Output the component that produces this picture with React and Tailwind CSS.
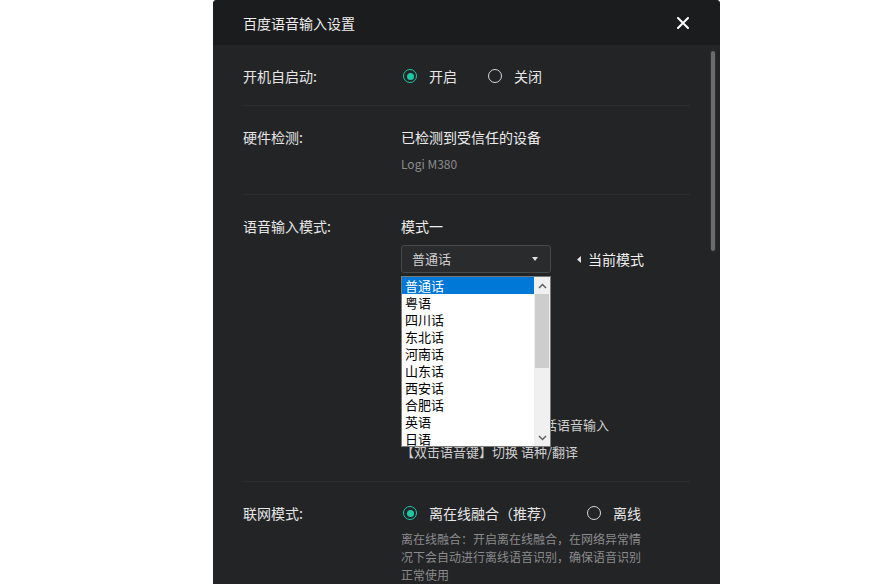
import React from "react";

const font = { fontFamily: '"Noto Sans CJK SC", "Noto Sans", sans-serif' };

function Radio({ checked }) {
  return checked ? (
    <span className="flex h-[14px] w-[14px] shrink-0 items-center justify-center rounded-full border-[1.5px] border-[#1fc7a5]">
      <span className="h-[7px] w-[7px] rounded-full bg-[#1fc7a5]" />
    </span>
  ) : (
    <span className="h-[14px] w-[14px] shrink-0 rounded-full border-[1.5px] border-[#d8d8d8]" />
  );
}

function Option({ checked, label }) {
  return (
    <div className="flex items-center gap-3">
      <Radio checked={checked} />
      <span className="text-[14px] leading-[20px] text-[#e6e6e6]">{label}</span>
    </div>
  );
}

function Divider() {
  return <div className="h-px bg-[#2c2d2f]" />;
}

const items = ["普通话", "粤语", "四川话", "东北话", "河南话", "山东话", "西安话", "合肥话", "英语", "日语", "韩语"];

export default function App() {
  return (
    <div className="flex h-[584px] w-[890px] overflow-hidden bg-white" style={font}>
      <div className="relative ml-[213px] flex w-[507px] flex-col overflow-hidden rounded-t-[4px] bg-[#232426]">
        {/* header */}
        <div className="flex h-[45px] shrink-0 items-center justify-between bg-[#1b1c1d] pl-[30px] pr-[31px]">
          <span className="text-[14px] leading-[20px] text-[#ececec]">百度语音输入设置</span>
          <svg width="12" height="12" viewBox="0 0 12 12">
            <path d="M1 1L11 11M11 1L1 11" stroke="#ffffff" strokeWidth="2" strokeLinecap="round" />
          </svg>
        </div>

        {/* body */}
        <div className="relative flex flex-col px-[30px]">
          {/* row 1 */}
          <div className="flex pb-[19px] pt-[21px]">
            <div className="w-[158px] text-[14px] leading-[20px] text-[#e6e6e6]">开机自启动:</div>
            <div className="flex items-center gap-[31px] pl-[2px]">
              <Option checked label="开启" />
              <Option label="关闭" />
            </div>
          </div>
          <Divider />

          {/* row 2 */}
          <div className="flex pb-[21px] pt-[21px]">
            <div className="w-[158px] text-[14px] leading-[20px] text-[#e6e6e6]">硬件检测:</div>
            <div className="flex flex-col">
              <span className="text-[14px] leading-[20px] text-[#ececec]">已检测到受信任的设备</span>
              <span className="mt-[8px] text-[12px] leading-[18px] text-[#8a8b8d]">Logi M380</span>
            </div>
          </div>
          <Divider />

          {/* row 3 */}
          <div className="flex pb-[20px] pt-[21px]">
            <div className="w-[158px] text-[14px] leading-[20px] text-[#e6e6e6]">语音输入模式:</div>
            <div className="relative flex flex-col">
              <span className="text-[14px] leading-[20px] text-[#ececec]">模式一</span>
              <div className="mt-[9px] flex items-center gap-[26px]">
                <div className="flex h-[28px] w-[150px] items-center justify-between rounded-[3px] border border-[#48494b] bg-[#2a2b2d] pl-[10px] pr-[12px]">
                  <span className="text-[13px] leading-[18px] text-[#d2d2d2]">普通话</span>
                  <svg width="6" height="4" viewBox="0 0 6 4">
                    <path d="M0 0H6L3 4Z" fill="#e0e0e0" />
                  </svg>
                </div>
                <div className="flex items-center gap-[7px]">
                  <svg width="4" height="7" viewBox="0 0 4 7">
                    <path d="M4 0V7L0 3.5Z" fill="#e0e0e0" />
                  </svg>
                  <span className="text-[14px] leading-[20px] text-[#f0f0f0]">当前模式</span>
                </div>
              </div>
              <div className="mt-[143px] text-[13px] leading-[18px] text-[#cfcfcf]">【单击语音键】进行普通话语音输入</div>
              <div className="mt-[9px] text-[13px] leading-[18px] text-[#cfcfcf]">【双击语音键】切换 语种/翻译</div>

              {/* open listbox */}
              <div className="absolute left-0 top-[60px] flex h-[171px] w-[150px] overflow-hidden border border-[#7a7a7a] bg-white">
                <div className="flex flex-1 flex-col">
                  {items.map((it, i) => (
                    <div
                      key={it}
                      className={
                        "h-[17px] shrink-0 pl-[3px] text-[13px] leading-[17px] " +
                        (i === 0 ? "bg-[#0078d7] text-white" : "text-black")
                      }
                    >
                      {it}
                    </div>
                  ))}
                </div>
                <div className="flex w-[16px] shrink-0 flex-col bg-[#f0f0f0]">
                  <div className="flex h-[17px] items-center justify-center">
                    <svg width="9" height="6" viewBox="0 0 9 6">
                      <path d="M1 5L4.5 1.5L8 5" stroke="#606060" strokeWidth="1.5" fill="none" />
                    </svg>
                  </div>
                  <div className="mx-[1px] h-[74px] bg-[#cdcdcd]" />
                  <div className="flex-1" />
                  <div className="flex h-[17px] items-center justify-center">
                    <svg width="9" height="6" viewBox="0 0 9 6">
                      <path d="M1 1L4.5 4.5L8 1" stroke="#606060" strokeWidth="1.5" fill="none" />
                    </svg>
                  </div>
                </div>
              </div>
            </div>
          </div>
          <Divider />

          {/* row 4 */}
          <div className="flex pb-[20px] pt-[21px]">
            <div className="w-[158px] text-[14px] leading-[20px] text-[#e6e6e6]">联网模式:</div>
            <div className="flex flex-col">
              <div className="flex items-center gap-[32px] pl-[2px]">
                <Option checked label="离在线融合（推荐）" />
                <Option label="离线" />
              </div>
              <p className="mt-[7px] w-[242px] text-[12px] leading-[18px] text-[#8a8b8d]">
                离在线融合：开启离在线融合，在网络异常情况下会自动进行离线语音识别，确保语音识别正常使用
              </p>
            </div>
          </div>

          {/* scrollbar */}
          <div className="absolute left-[497px] top-[4px] h-[204px] w-[6px] rounded-full border border-[#2e2f31] bg-[#1f2022]">
            <div className="mx-auto mt-[1px] h-[200px] w-[4px] rounded-full bg-[#6a6b6d]" />
          </div>
        </div>
      </div>
    </div>
  );
}
